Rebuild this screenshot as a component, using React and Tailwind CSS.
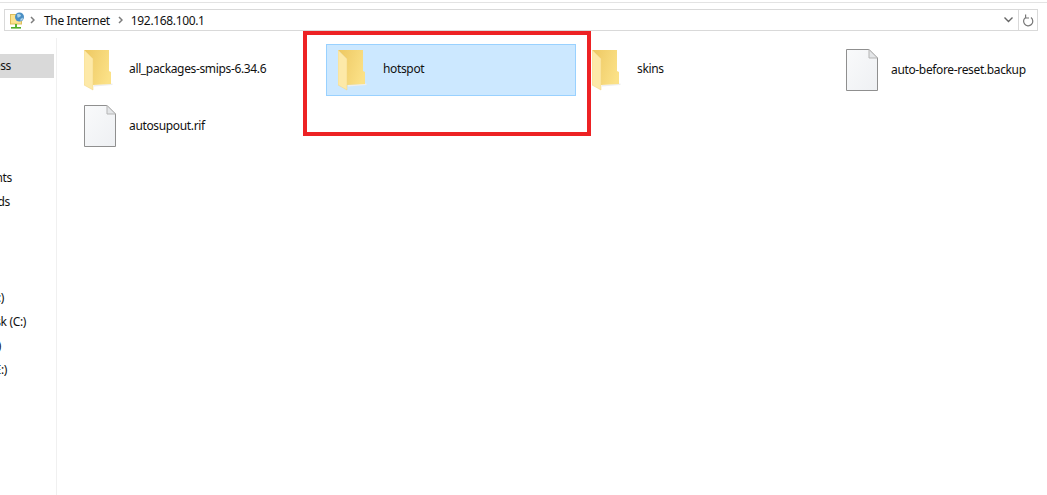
const font = 'font-["Noto_Sans",sans-serif] tracking-[-0.35px]';

function FolderIcon() {
  return (
    <svg width="29" height="41" viewBox="0 0 29 41" className="shrink-0">
      <defs>
        <linearGradient id="folderBack" x1="0" y1="0.2" x2="1" y2="0.6">
          <stop offset="0" stopColor="#eec964" />
          <stop offset="1" stopColor="#fbe187" />
        </linearGradient>
      </defs>
      <path d="M10 35 L28.5 33.5 L28.5 35 L10 36.5 Z" fill="#eeeeee" />
      <path d="M0 0 H25 V21 L27 22 V34 L9 35 V9 Z" fill="url(#folderBack)" />
      <path d="M0 0 L9 9 V40 L0 35 Z" fill="#fde9a8" stroke="#f3d583" strokeWidth="0.5" />
    </svg>
  );
}

function FileIcon() {
  return (
    <svg width="32" height="42" viewBox="0 0 32 42" className="shrink-0">
      <defs>
        <linearGradient id="fileFill" x1="0" y1="0" x2="1" y2="1">
          <stop offset="0" stopColor="#f9fafb" />
          <stop offset="1" stopColor="#eef0f3" />
        </linearGradient>
      </defs>
      <path d="M0.5 0.5 H23 L31.5 9 V41.5 H0.5 Z" fill="url(#fileFill)" stroke="#8f8f8f" />
      <path d="M23 0.5 V9 H31.5 Z" fill="#e4e6e8" stroke="#b5b5b5" />
    </svg>
  );
}

function NetworkIcon() {
  return (
    <svg width="15" height="17" viewBox="0 0 15 17" className="shrink-0">
      <rect x="0.5" y="2.5" width="11" height="9.5" fill="#fbe38f" stroke="#dcbd5c" />
      <rect x="5" y="12" width="2" height="3" fill="#5cb531" />
      <rect x="1" y="15" width="10" height="1.6" fill="#4fae2a" />
      <circle cx="9.5" cy="5" r="4.5" fill="#4a8fc4" />
      <path d="M7 2.5 C9 1.5 11 2.5 11 4 C9.5 4.5 9 6 7.5 5.5 Z" fill="#a9d3ea" />
      <path d="M10.5 7 L13 5.5 L12.5 8 L10.5 9 Z" fill="#b8d9ec" />
    </svg>
  );
}

function Crumb() {
  return (
    <svg width="5" height="8" viewBox="0 0 5 8" className="shrink-0">
      <path d="M1 1 L4 4 L1 7" fill="none" stroke="#7d7d7d" strokeWidth="1.5" />
    </svg>
  );
}

function AddressBar() {
  return (
    <div className="ml-1 mt-[6px] flex h-[22px] w-[1034px] items-center border border-[#d9d9d9] bg-white text-xs text-[#111]">
      <div className="ml-[5px]"><NetworkIcon /></div>
      <div className="ml-[5px]"><Crumb /></div>
      <span className="ml-[9px] translate-y-px">The Internet</span>
      <div className="ml-[8px]"><Crumb /></div>
      <span className="ml-[8px] translate-y-px">192.168.100.1</span>
      <div className="ml-auto flex h-full items-center">
        <svg width="9" height="6" viewBox="0 0 9 6" className="mr-[5px]">
          <path d="M0.5 0.5 L4.5 4.5 L8.5 0.5" fill="none" stroke="#666" strokeWidth="1.4" />
        </svg>
        <div className="h-full w-px bg-[#d9d9d9]" />
        <svg width="12" height="13" viewBox="0 0 12 13" className="mx-[3px]">
          <path d="M4 3.2 A4.6 4.6 0 1 0 9 3.6" fill="none" stroke="#777" strokeWidth="1.2" />
          <path d="M3.6 0.5 V4 H7" fill="none" stroke="#777" strokeWidth="1.2" />
        </svg>
      </div>
    </div>
  );
}

function NavRow({ label, pad, gap, active }) {
  return (
    <div className={`flex h-6 w-[54px] items-center justify-end overflow-hidden whitespace-nowrap text-xs text-[#111] ${pad} ${gap} ${active ? 'bg-[#d9d9d9]' : ''}`}>
      {label}
    </div>
  );
}

function Sidebar() {
  return (
    <div className="h-full w-[57px] shrink-0 border-r border-[#f0f0f0] pt-[16px]">
      <NavRow label="Quick access" pad="pr-[43px]" active />
      <NavRow label="Documents" pad="pr-[42px]" gap="mt-[88px]" />
      <NavRow label="Downloads" pad="pr-[44px]" />
      <NavRow label="Recovery (D:)" pad="pr-[50px]" gap="mt-[72px]" />
      <NavRow label="Local Disk (C:)" pad="pr-[28px]" />
      <NavRow label="Network (F:)" pad="pr-[53px]" />
      <NavRow label="USB Drive (E:)" pad="pr-[47px]" />
    </div>
  );
}

function Item({ name, kind, selected }) {
  return (
    <div className={`flex h-[52px] w-[250px] items-center border pl-[11px] ${selected ? 'border-[#99d1ff] bg-[#cce8ff]' : 'border-transparent'}`}>
      <div className="w-[45px] shrink-0">{kind === 'folder' ? <FolderIcon /> : <FileIcon />}</div>
      <span className={`whitespace-nowrap text-xs text-[#111] ${kind === 'folder' ? 'mb-[3px]' : ''}`}>{name}</span>
    </div>
  );
}

export default function App() {
  return (
    <div className={`relative h-[495px] w-[1047px] overflow-hidden bg-white ${font}`}>
      <div className="h-[38px] pt-[2px]">
        <div className="h-px bg-[#e3e3e3]" />
        <AddressBar />
      </div>
      <div className="flex h-[457px]">
        <Sidebar />
        <div className="grid grid-cols-[repeat(4,250px)] content-start gap-x-1 gap-y-1 pl-[15px] pt-[6px]">
          <Item name="all_packages-smips-6.34.6" kind="folder" />
          <Item name="hotspot" kind="folder" selected />
          <Item name="skins" kind="folder" />
          <Item name="auto-before-reset.backup" kind="file" />
          <Item name="autosupout.rif" kind="file" />
        </div>
      </div>
      <div className="absolute left-[303px] top-[31px] h-[105px] w-[288px] border-4 border-[#ed2224]" />
    </div>
  );
}
